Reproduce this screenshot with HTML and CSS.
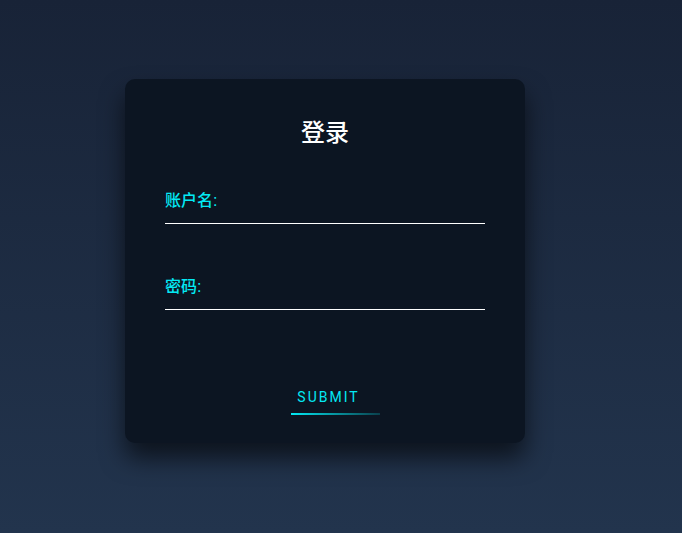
FILE: index.html
```html
<!DOCTYPE html>
<html lang="zh-CN">
<head>
    <meta charset="UTF-8">
    <meta name="viewport" content="width=device-width, initial-scale=1.0">
    <title>登录</title>
    <link rel="stylesheet" href="styles.css">
</head>
<body>
    <div class="login-box">
        <h2>登录</h2>

        <!-- 登录表单 -->
        <form id="login-form">
            <div class="user-box">
                <label for="username">账户名:</label>
                <input type="text" id="username" name="username">
            </div>
            <div class="user-box">
                <label for="password">密码:</label>
                <input type="password" id="password" name="password">
            </div>
            <div class="submit-row">
                <a href="#" class="submit-btn">
                    <span class="line"></span>
                    SUBMIT
                </a>
            </div>
        </form>
    </div>
</body>
</html>
```

FILE: styles.css
```css
* {
    box-sizing: border-box;
    margin: 0;
    padding: 0;
}
html, body {
    height: 100%;
}
body {
    font-family: "Liberation Sans", "Noto Sans CJK SC", sans-serif;
    background: linear-gradient(180deg, #182337 0%, #22344d 100%);
    padding: 79px 0 0 125px;
}
.login-box {
    width: 400px;
    padding: 40px 40px 28px;
    background-color: #0c1522;
    border-radius: 10px;
    box-shadow: 0 15px 25px rgba(0, 0, 0, 0.6);
}
.login-box h2 {
    color: #fff;
    text-align: center;
    font-family: "Liberation Serif", "Noto Sans CJK SC", serif;
    font-size: 24px;
    line-height: 28px;
    font-weight: 500;
    margin-bottom: 44px;
}
.user-box {
    display: flex;
    flex-direction: column;
}
.user-box + .user-box {
    margin-top: 53px;
}
.user-box label {
    color: #03e9f4;
    font-size: 16px;
    line-height: 20px;
    font-weight: 500;
}
.user-box input {
    height: 13px;
    border: none;
    border-bottom: 1px solid #fff;
    background: transparent;
    outline: none;
    color: #fff;
    font-size: 16px;
}
.submit-row {
    display: flex;
    justify-content: center;
    padding-left: 7px;
    margin-top: 69px;
}
.submit-btn {
    position: relative;
    display: inline-block;
    padding: 10px 20px;
    color: #03e9f4;
    font-family: Roboto, "Liberation Sans", sans-serif;
    font-size: 14px;
    line-height: 16px;
    letter-spacing: 2px;
    text-decoration: none;
}
.submit-btn .line {
    position: absolute;
    left: 14px;
    right: 0;
    bottom: 0;
    height: 2px;
    background: linear-gradient(90deg, #03e9f4, rgba(3, 233, 244, 0.2));
}
```
